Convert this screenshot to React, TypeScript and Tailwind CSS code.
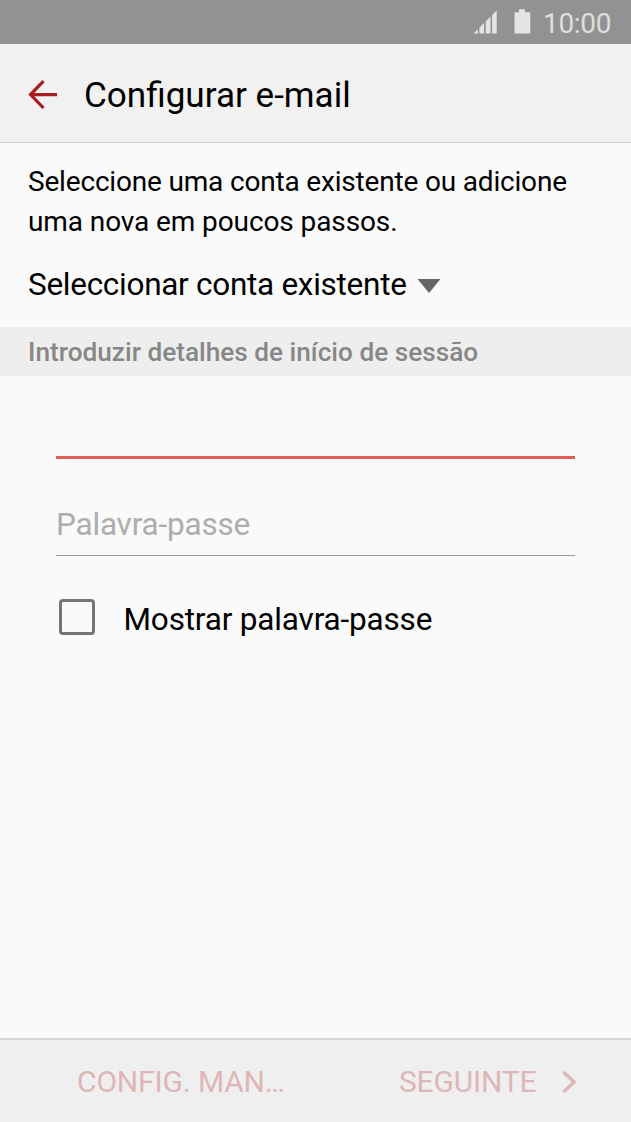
import React from 'react';

function StatusBar() {
  return (
    <div className="flex h-11 items-center bg-[#929292] pl-[473px] text-[#e4e4e4]">
      <svg className="h-6 w-6 shrink-0" viewBox="0 0 24 24" fill="currentColor">
        <path d="M.5 23.600 4.900 19.200v4.400ZM6.500 23.600v-6.100l4.500-4.500v10.600ZM12.700 23.600V11.400l4.800-4.800v17ZM19.100 23.600V4.900L23.700.4v23.200Z" />
      </svg>
      <svg className="ml-[17px] h-[26px] w-[17px] shrink-0" viewBox="0 0 17 26" fill="currentColor">
        <path d="M5 .3h6v3h5.300v21.300H.5v-21.300H5Z" />
      </svg>
      <span className="ml-[12px] mt-[3px] whitespace-nowrap text-[28px] leading-[40px] tracking-[-0.3px] text-[#dedede]">10:00</span>
    </div>
  );
}

function Header() {
  return (
    <header className="flex h-[99px] items-center border-b border-[#cecece] bg-[#f1f1f1] pl-7">
      <svg className="mt-1 h-[30px] w-[30px] shrink-0" viewBox="0 0 30 30" fill="none" stroke="#a81d20" strokeWidth="3.200">
        <path d="M29 14.600H3M15.500 1.200 2.500 14.600l13 13.400" />
      </svg>
      <h1 className="ml-[26px] mt-[3px] whitespace-nowrap text-[35.1px] leading-[44px]">Configurar e-mail</h1>
    </header>
  );
}

export default function App() {
  return (
    <div className="flex h-[1122px] w-[631px] flex-col overflow-hidden bg-[#fafafa] font-[Roboto,sans-serif] text-black">
      <StatusBar />
      <Header />
      <main className="flex-1">
        <p className="whitespace-nowrap pl-7 pt-[19px] text-[28px] leading-[40px]">
          <span className="tracking-[-0.18px]">Seleccione uma conta existente ou adicione</span>
          <br />
          <span className="tracking-[-0.1px]">uma nova em poucos passos.</span>
        </p>
        <div className="mt-[23px] flex h-10 items-center pl-7">
          <span className="w-[379px] whitespace-nowrap text-[31.5px] leading-[40px] tracking-[-0.28px]">Seleccionar conta existente</span>
          <svg className="ml-[10px] mt-0.5 h-[14px] w-6" viewBox="0 0 24 14" fill="#666">
            <path d="M.5 0h23L12 14Z" />
          </svg>
        </div>
        <h2 className="mt-[22px] flex h-[49px] items-center bg-[#eee] pl-7 pt-[3px] text-[26.200px] font-medium text-[#878787]">
          Introduzir detalhes de início de sessão
        </h2>
        <div className="px-14">
          <div className="h-[83px] border-b-[3px] border-[#dd5f58]" />
          <div className="flex h-[97px] items-end border-b border-[#999] pb-[10px] text-[31.5px] leading-[40px] tracking-[-0.2px] text-[#adadad]">
            Palavra-passe
          </div>
          <label className="mt-[40px] flex items-center pl-[3px]">
            <span className="mb-[3px] size-9 rounded-[4px] border-[3px] border-[#757575]" />
            <span className="ml-[28.500px] mt-[4px] whitespace-nowrap text-[31.5px] leading-[40px] tracking-[-0.17px]">Mostrar palavra-passe</span>
          </label>
        </div>
      </main>
      <footer className="flex h-[84px] items-center border-t-2 border-[#d5d5d5] bg-[#efefef] pl-[77px] pt-px text-[30px] leading-[40px] text-[#ddb7b7]">
        <span className="w-[322px] whitespace-nowrap tracking-[-0.15px]">CONFIG. MAN…</span>
        <span className="whitespace-nowrap tracking-[-0.2px]">SEGUINTE</span>
        <svg className="ml-[25px] mt-px h-6 w-4" viewBox="0 0 16 24" fill="none" stroke="currentColor" strokeWidth="3.500">
          <path d="M2.500 2l10.500 10-10.500 10" />
        </svg>
      </footer>
    </div>
  );
}
